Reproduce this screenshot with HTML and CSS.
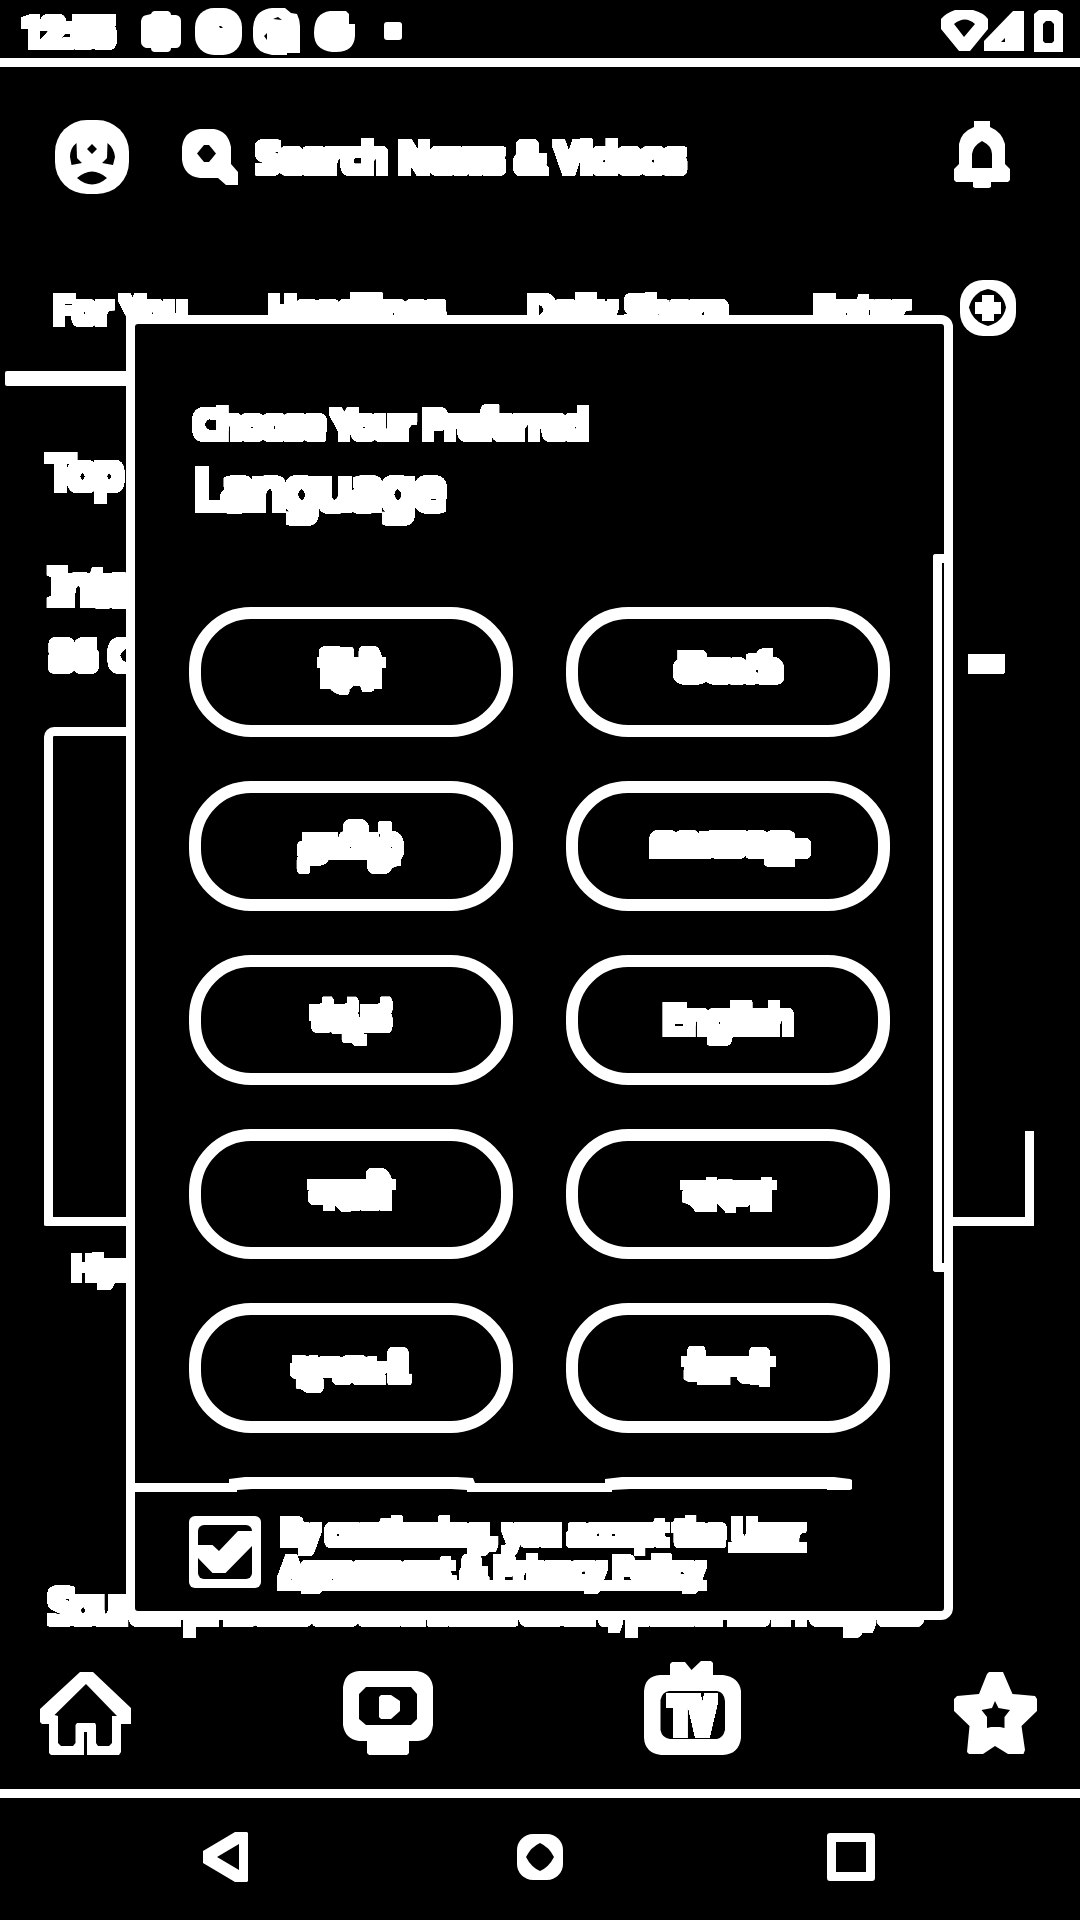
FILE: index.html
```html
<!DOCTYPE html>
<html lang="en">
<head>
<meta charset="utf-8">
<title>News – choose language</title>
<link rel="stylesheet" href="styles.css">
</head>
<body>
<svg class="defs" width="0" height="0" aria-hidden="true">
  <filter id="thick" x="-20%" y="-40%" width="140%" height="180%" color-interpolation-filters="sRGB">
    <feComponentTransfer><feFuncA type="linear" slope="10" intercept="-0.3"/></feComponentTransfer>
    <feMorphology operator="dilate" radius="4"/>
  </filter>
</svg>
<div class="screen">
  <header class="status">
    <span class="t time">12:55</span>
    <svg class="s-icons" width="262" height="48" viewBox="141 8 262 48">
      <path d="M151 14Q152 11 155 11H168Q171 12 171 15H176Q181 16 181 21V43Q180 48 176 48H171Q171 52 167 52H155Q151 52 151 48H146Q141 46 141 42V21Q142 15 147 15Z"/>
      <rect x="195" y="8" width="47" height="47" rx="19"/>
      <path class="k" d="M219 26h2l2 2h-3z"/>
      <path d="M272 8H285L291 13L297 14Q300 20 300 26V53H287V55H272Q253 52 253 36V28Q254 10 272 8Z"/>
      <path class="k" d="M273 19L278 17L282 20Z M264 36L267 33V40Z"/>
      <path d="M330 11H346L349 14V24H355V36Q354 52 336 52H332Q314 50 314 33Q314 13 330 11Z"/>
      <rect x="384" y="22" width="18" height="18" rx="3"/>
    </svg>
    <svg class="s-right" width="122" height="42" viewBox="941 10 122 42">
      <path fill-rule="evenodd" d="M955 10H973Q984 13 988 19V29L970 51H959L941 29V19Q946 13 955 10Z M954 24L964 37L975 24Q965 15 954 24Z"/>
      <path d="M984 51V41L1013 11H1024V51Z"/><path class="k" d="M1001 42L1005 38V42Z"/>
      <path fill-rule="evenodd" d="M1039 10H1057L1063 14V52H1034V14Z M1046 21L1043 24V41L1045 43H1052L1054 41V24L1051 21Z"/>
    </svg>
  </header>
  <div class="rule"></div>
  <div class="header">
    <svg class="avatar" width="74" height="74" viewBox="55 120 74 74">
      <rect x="55" y="120" width="74" height="74" rx="32"/>
      <path class="k" d="M92 144L97 149L92 154L87 149Z M76.5 143Q70 148 70 157L71.5 165L82 163L77 158Z M107.500 143Q114 148 115 157L113 165L102 163L107 158Z M77 178Q92 165 107 178Q92 191 77 178Z"/>
    </svg>
    <svg class="glass" width="56" height="56" viewBox="182 129 56 56">
      <path d="M200 129H214Q228 131 231 147V164L238 172V185H226L218 178H200Q184 176 182 160V147Q184 131 200 129Z"/>
      <path class="k" d="M204 145L209 145L216 153.500L209 162L204 162L197 153.500Z"/>
    </svg>
    <span class="t search">Search News &amp; Videos</span>
    <svg class="bell" width="56" height="67" viewBox="954 121 56 67">
      <path d="M974 121H990V127Q1002 132 1005 144V164L1010 169V180L1008 182H991V187L989 188H975L973 187V182H956L954 180V169L959 164V144Q961 132 974 127Z"/>
      <path class="k" d="M982 141Q992 146 992 154V168H972V154Q973 146 982 141Z"/>
    </svg>
  </div>
  <nav class="tabs">
    <span class="t tab tab1">For You</span>
    <span class="t tab tab2">Headlines</span>
    <span class="t tab tab3">Daily Share</span>
    <span class="t tab tab4">Enter</span>
    <svg class="plus" width="56" height="56" viewBox="960 280 56 56">
      <rect x="960" y="280" width="56" height="56" rx="23"/>
      <path class="k" d="M988 289Q1003 292 1006 307.500Q1003 322 988 326Q973 322 969 307.500Q973 292 988 289Z"/>
      <path d="M982 295H994V302H1001V314H994V321H982V314H975V302H982Z"/>
    </svg>
  </nav>
  <div class="indicator"></div>
  <main class="feed">
    <div class="t top">Top</div>
    <div class="t story">Interest</div>
    <div class="meta"><span class="t">86 C</span><span class="t ago">ms</span></div>
    <div class="card"><div class="card-l"></div><div class="card-r"></div></div>
    <div class="t cap">Hiya</div>
    <div class="t source">Source: photos as at a state court, patients in city, as</div>
  </main>
  <nav class="bottom">
    <svg class="b1" width="91" height="83" viewBox="40 1672 91 83">
      <path fill-rule="evenodd" d="M80 1672H93L131 1708V1724H121V1752L119 1755H87V1732H84V1755H51L49 1753V1724H42L40 1722V1709Z M86 1684L54.500 1715L58 1716V1743L61 1746H73L75.500 1743V1725L77 1723H95L96 1725V1743L98 1746H109L112 1743V1716H117Z"/>
    </svg>
    <svg class="b2" width="90" height="84" viewBox="343 1671 90 84">
      <path fill-rule="evenodd" d="M359 1671H417Q431 1673 433 1687V1725Q431 1740 418 1741H409V1753L407 1755H369L367 1753V1741H359Q345 1739 343 1725V1687Q345 1672 359 1671Z M366 1687L359 1694V1719L366 1725H411L417 1719V1694L411 1687Z"/>
      <path d="M379 1697L381 1695H391L400 1701V1711L391 1719H381L379 1717Z"/>
    </svg>
    <svg class="b3" width="98" height="94" viewBox="643 1661 98 94">
      <path fill-rule="evenodd" d="M669 1664L671 1662H684L690.500 1670L700 1661H710L712 1663V1675H722Q738 1677 740 1691V1738Q738 1754 722 1755H660Q644 1753 643 1738V1691Q644 1676 659 1675H669Z M668 1691Q661 1692 659.500 1700V1730Q661 1738 669 1739H716Q722 1738 724 1730V1701Q723 1692 716 1691Z"/>
      <text class="tv" x="669" y="1734" textLength="44" lengthAdjust="spacingAndGlyphs">TV</text>
    </svg>
    <svg class="b4" width="83" height="82" viewBox="954 1672 83 82">
      <path fill-rule="evenodd" d="M989 1672H1003L1012.500 1694L1035 1696L1037 1699V1711L1021.500 1726L1025 1750L1023.500 1754H1008L995 1746L983 1754H969L967 1752L969.500 1726L954 1711V1699L957 1696L979 1694L987 1674Z M995 1701L992 1708L981.500 1710L987 1717V1728L991 1727H1000L1004.500 1728V1717L1010 1710L998.500 1708Z"/>
    </svg>
  </nav>
  <div class="rule"></div>
  <footer class="system">
    <svg class="n1" width="45" height="50" viewBox="203 1832 45 50"><path fill-rule="evenodd" d="M235 1832H247L248 1833V1881L247 1882H235L203 1863V1851Z M239 1844L217 1857L239 1870Z"/></svg>
    <svg class="n2" width="46" height="46" viewBox="517 1834 46 46"><rect x="517" y="1834" width="46" height="46" rx="16"/><path class="k" d="M540 1843Q549 1847 554 1857Q549 1867 540 1871Q531 1867 526 1857Q531 1847 540 1843Z"/></svg>
    <span class="n3"></span>
  </footer>

  <section class="modal">
    <h1 class="t choose">Choose Your Preferred</h1>
    <h2 class="t language">Language</h2>
    <div class="grid">
      <button><span class="t">हिंदी</span></button>
      <button class="te"><span class="t">తెలుగు</span></button>
      <button class="ta"><span class="t">தமிழ்</span></button>
      <button class="ml"><span class="t">മലയാളം</span></button>
      <button class="kn"><span class="t">ಕನ್ನಡ</span></button>
      <button><span class="t">English</span></button>
      <button><span class="t">मराठी</span></button>
      <button class="bn"><span class="t">বাংলা</span></button>
      <button class="gu"><span class="t">ગુજરાતી</span></button>
      <button class="pa"><span class="t">ਪੰਜਾਬੀ</span></button>
    </div>
    <svg class="divider" width="809" height="15" viewBox="135 1477 809 15">
      <path d="M135 1483H229V1479L245 1477H457L473 1478L475 1483H605V1479L622 1477H834L850 1479L852 1480V1489L850 1490H827V1489H630L612 1490V1492H467V1490L451 1489H387L252 1489L237 1490V1492H135Z"/>
    </svg>
    <div class="consent">
      <svg width="72" height="72" viewBox="189 1516 72 72">
        <rect x="189" y="1516" width="72" height="72" rx="6"/><rect class="k" x="198" y="1525" width="54" height="54" rx="6"/>
        <path d="M198 1545H212.500L219 1551L238 1531H252V1546L225.500 1573H212.500L198 1558Z"/>
      </svg>
      <p><span class="t l1">By continuing, you accept the <u>User</u></span><span class="t l2"><u>Agreement &amp; Privacy Policy</u></span></p>
    </div>
    <div class="scrollbar"></div>
  </section>
</div>
</body>
</html>
```
FILE: styles.css
```css
* { box-sizing: border-box; margin: 0; padding: 0; }
body { background: #000; color: #fff; font-family: "Noto Sans", "Liberation Sans", sans-serif; }
.defs { position: absolute; }
svg { display: block; flex: none; fill: #fff; }
.k { fill: #000; }
.t { display: block; white-space: nowrap; filter: url(#thick); font-weight: 400; }
.screen { position: relative; width: 1080px; height: 1920px; overflow: hidden; display: flex; flex-direction: column; background: #000; }

.status { height: 58px; display: flex; align-items: flex-start; flex: none; }
.time { width: 97px; margin-left: 22px; font: 400 39px/66px Roboto, sans-serif; letter-spacing: -1.3px; }
.s-icons { margin: 8px 0 0 22px; }
.s-right { margin: 10px 17px 0 auto; }
.rule { height: 9px; background: #fff; flex: none; }

.header { height: 180px; display: flex; align-items: center; padding: 0 70px 0 55px; flex: none; }
.glass { margin-left: 53px; }
.search { margin-left: 19px; font-size: 40px; line-height: 60px; letter-spacing: 0.7px; }
.bell { margin: 0 0 5px auto; }

.tabs { height: 124px; display: flex; align-items: center; padding-left: 54px; flex: none; }
.tab { margin-top: 2px; font-size: 36px; line-height: 60px; letter-spacing: 0.9px; flex: none; }
.tab1 { width: 215px; }
.tab2 { width: 259px; }
.tab3 { width: 286px; }
.tab4 { width: 146px; }
.plus { margin-bottom: 2px; }
.indicator { width: 130px; height: 15px; margin-left: 5px; border-radius: 2px; background: #fff; flex: none; }

.feed { height: 1250px; padding-left: 44px; flex: none; }
.top { margin: 35px 0 0 4px; font-size: 46px; line-height: 100px; letter-spacing: -1.8px; }
.story { margin: 24px 0 0 5px; font-size: 49px; line-height: 80px; letter-spacing: -3px; }
.meta { display: flex; height: 60px; margin-left: 6px; font-size: 40px; line-height: 60px; letter-spacing: 1px; }
.ago { margin: 6px 78px 0 auto; font-size: 22px; letter-spacing: 0; }
.card { display: flex; justify-content: space-between; align-items: flex-end; width: 990px; height: 499px; margin-top: 42px; }
.card-l { width: 100px; height: 499px; border: solid #fff; border-width: 9px 0 9px 9px; border-radius: 10px 0 0 2px; }
.card-r { width: 100px; height: 95px; border: solid #fff; border-width: 0 9px 9px 0; }
.cap { margin: 11px 0 0 28px; font-size: 31px; line-height: 60px; letter-spacing: -1px; }
.source { margin: 279px 0 0 5px; font-size: 45px; line-height: 60px; letter-spacing: -4.2px; }

.bottom { height: 153px; display: flex; align-items: flex-end; padding: 0 43px 34px 40px; justify-content: space-between; flex: none; }
.b4 { margin-bottom: 1px; }
.tv { font: 700 52px "Noto Sans", sans-serif; filter: url(#thick); }

.system { height: 122px; display: flex; align-items: center; padding: 0 205px 4px 203px; flex: none; }
.n2 { margin-left: 269px; }
.n3 { margin-left: auto; width: 48px; height: 48px; border: 9px solid #fff; border-radius: 3px; }

.modal { position: absolute; left: 126px; top: 315px; width: 827px; height: 1305px; border: 9px solid #fff; border-radius: 12px; background: #000; padding-top: 74px; }
.choose { margin-left: 59px; font-size: 38px; line-height: 50px; letter-spacing: -0.5px; }
.language { margin: 10px 0 0 59px; font-size: 55px; line-height: 60px; letter-spacing: -0.8px; }
.grid { display: grid; grid-template-columns: 324px 324px; grid-auto-rows: 130px; gap: 44px 53px; margin: 89px 0 0 54px; }
.grid button { display: flex; align-items: center; justify-content: center; background: none; border: 12px solid #fff; border-radius: 62px; color: #fff; font: 400 38px/60px "Noto Sans", sans-serif; padding-bottom: 4px; }
.grid .te { padding-bottom: 14px; }
.grid .ta { font-size: 42px; padding-bottom: 12px; }
.grid .ml { padding-bottom: 12px; }
.grid .kn { font-size: 44px; padding-bottom: 16px; }
.grid .bn { padding-bottom: 2px; }
.grid .gu { font-size: 34px; padding-bottom: 0; }
.grid .pa { font-size: 34px; padding-bottom: 2px; }
.divider { margin-top: 44px; }
.consent { display: flex; margin: 24px 0 0 54px; }
.consent p { margin: -3px 0 0 20px; font-size: 32px; line-height: 38px; }
.l2 { letter-spacing: 0.45px; }
.scrollbar { position: absolute; left: 798px; top: 230px; width: 11px; height: 718px; border: solid #fff; border-width: 9px 0 9px 9px; border-radius: 3px 0 0 3px; }
```
